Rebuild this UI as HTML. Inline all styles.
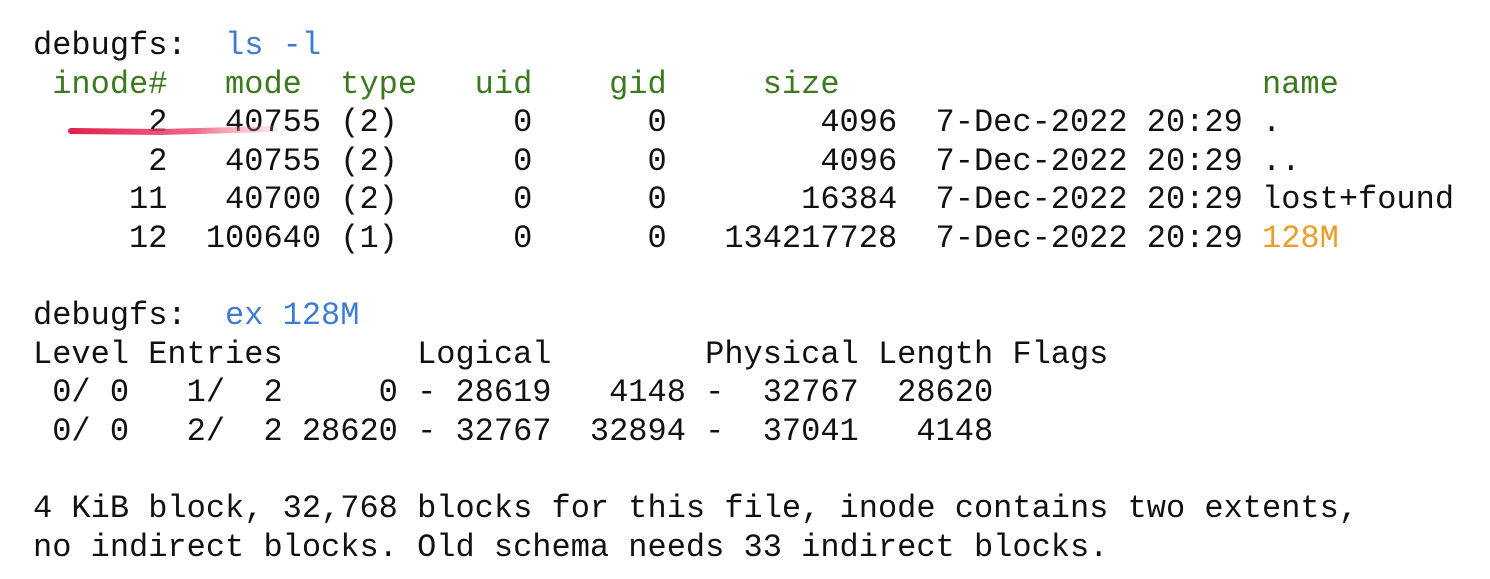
<!DOCTYPE html>
<html><head><meta charset="utf-8"><style>
html,body{margin:0;padding:0;background:#fff;width:1490px;height:579px;overflow:hidden}
pre{position:absolute;left:33px;top:27px;margin:0;font-family:"Liberation Mono",monospace;font-size:32px;line-height:38.6px;color:#111;letter-spacing:0}
.g{color:#3b7a1f}.b{color:#3f7bd3}.o{color:#eb9e25}
svg{position:absolute;left:0;top:0}
</style></head><body>
<pre>debugfs:  <span class="b">ls -l</span>
<span class="g"> inode#   mode  type   uid    gid     size                      name</span>
      2   40755 (2)      0      0        4096  7-Dec-2022 20:29 .
      2   40755 (2)      0      0        4096  7-Dec-2022 20:29 ..
     11   40700 (2)      0      0       16384  7-Dec-2022 20:29 lost+found
     12  100640 (1)      0      0   134217728  7-Dec-2022 20:29 <span class="o">128M</span>

debugfs:  <span class="b">ex 128M</span>
Level Entries       Logical        Physical Length Flags
 0/ 0   1/  2     0 - 28619   4148 -  32767  28620
 0/ 0   2/  2 28620 - 32767  32894 -  37041   4148

4 KiB block, 32,768 blocks for this file, inode contains two extents,
no indirect blocks. Old schema needs 33 indirect blocks.</pre>
<svg width="1490" height="579"><defs><linearGradient id="r" x1="0" x2="1"><stop offset="0" stop-color="#e0204a"/><stop offset="0.6" stop-color="#e8406a" stop-opacity="0.8"/><stop offset="1" stop-color="#f08aa0" stop-opacity="0.2"/></linearGradient></defs><path d="M71 131 L160 132 L275 129" stroke="url(#r)" stroke-width="6" fill="none" stroke-linecap="round"/></svg>
</body></html>
